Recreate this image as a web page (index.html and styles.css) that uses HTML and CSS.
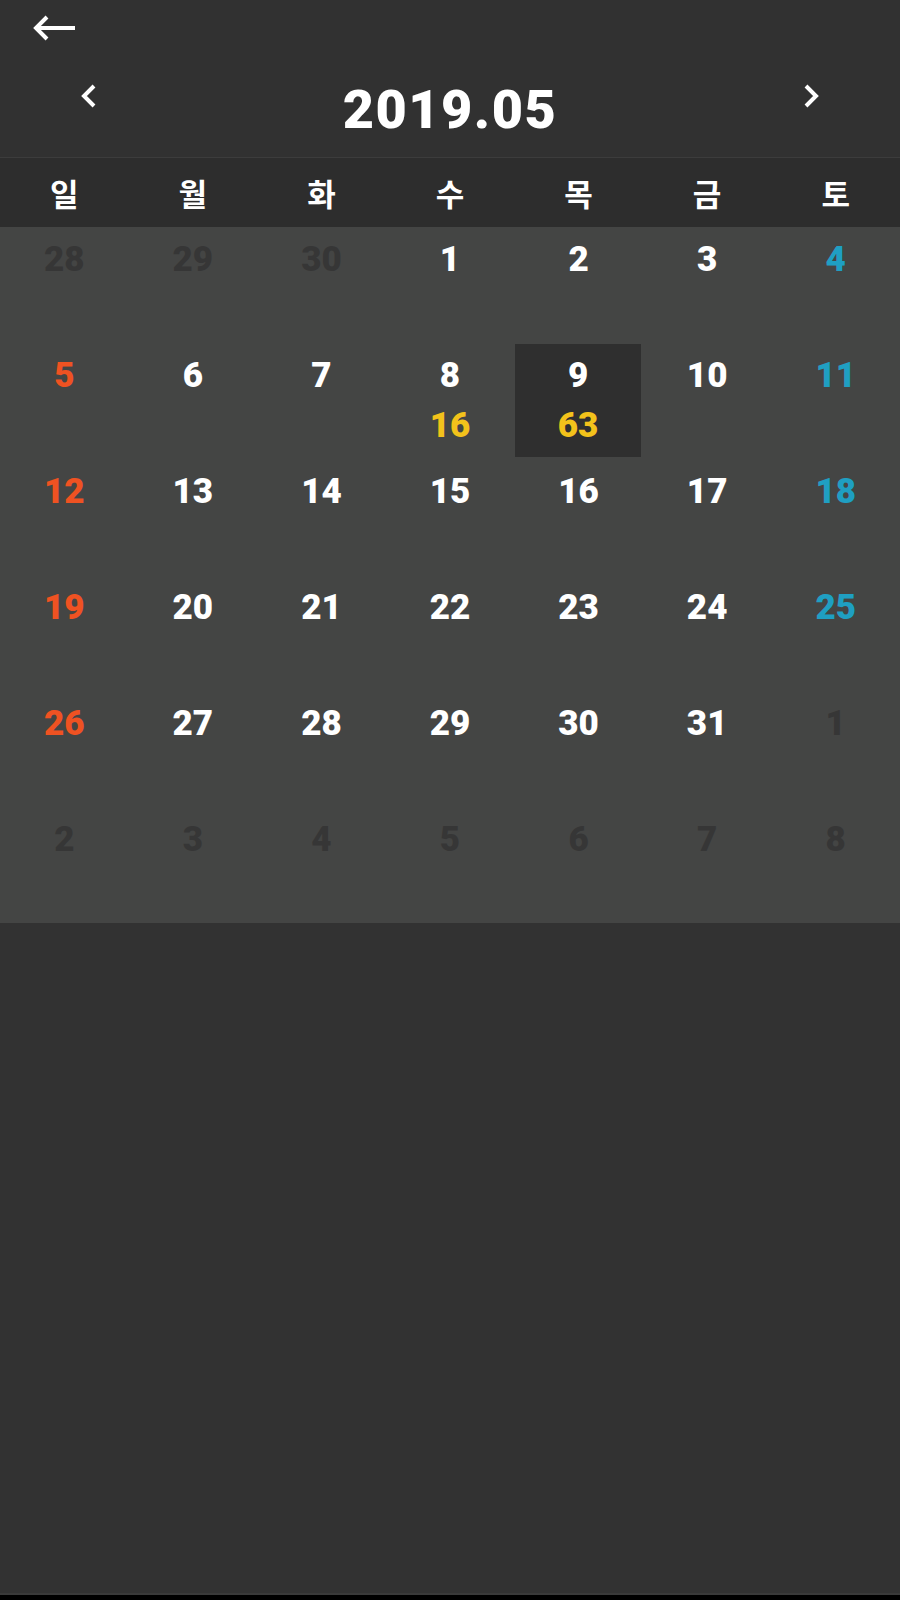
FILE: index.html
```html
<!DOCTYPE html>
<html lang="ko">
<head>
    <meta charset="UTF-8">
    <meta name="viewport" content="width=device-width, initial-scale=1.0">
    <title>달력</title>
    <link rel="stylesheet" href="styles.css">
</head>
<body>
    <div class="screen">
        <div class="top-bar">
            <a href="#" class="back-button">
                <svg width="44" height="26" viewBox="0 0 44 26">
                    <path d="M3 13 H42 M14 2 L3 13 L14 24" fill="none" stroke="#fff" stroke-width="4" stroke-linejoin="miter"/>
                </svg>
            </a>
        </div>

        <div class="month-bar">
            <a href="#" class="month-nav">
                <svg width="20" height="26" viewBox="0 0 20 26">
                    <path d="M15 3 L5 13 L15 23" fill="none" stroke="#fff" stroke-width="4"/>
                </svg>
            </a>
            <h1 class="month-title">2019.05</h1>
            <a href="#" class="month-nav">
                <svg width="20" height="26" viewBox="0 0 20 26">
                    <path d="M5 3 L15 13 L5 23" fill="none" stroke="#fff" stroke-width="4"/>
                </svg>
            </a>
        </div>

        <div class="week-row">
            <div>일</div>
            <div>월</div>
            <div>화</div>
            <div>수</div>
            <div>목</div>
            <div>금</div>
            <div>토</div>
        </div>

        <div class="days">
            <!-- 1주 -->
            <div class="day other"><span class="num">28</span></div>
            <div class="day other"><span class="num">29</span></div>
            <div class="day other"><span class="num">30</span></div>
            <div class="day"><span class="num">1</span></div>
            <div class="day"><span class="num">2</span></div>
            <div class="day"><span class="num">3</span></div>
            <div class="day sat"><span class="num">4</span></div>
            <!-- 2주 -->
            <div class="day sun"><span class="num">5</span></div>
            <div class="day"><span class="num">6</span></div>
            <div class="day"><span class="num">7</span></div>
            <div class="day"><span class="num">8</span><span class="count">16</span></div>
            <div class="day today"><span class="num">9</span><span class="count">63</span></div>
            <div class="day"><span class="num">10</span></div>
            <div class="day sat"><span class="num">11</span></div>
            <!-- 3주 -->
            <div class="day sun"><span class="num">12</span></div>
            <div class="day"><span class="num">13</span></div>
            <div class="day"><span class="num">14</span></div>
            <div class="day"><span class="num">15</span></div>
            <div class="day"><span class="num">16</span></div>
            <div class="day"><span class="num">17</span></div>
            <div class="day sat"><span class="num">18</span></div>
            <!-- 4주 -->
            <div class="day sun"><span class="num">19</span></div>
            <div class="day"><span class="num">20</span></div>
            <div class="day"><span class="num">21</span></div>
            <div class="day"><span class="num">22</span></div>
            <div class="day"><span class="num">23</span></div>
            <div class="day"><span class="num">24</span></div>
            <div class="day sat"><span class="num">25</span></div>
            <!-- 5주 -->
            <div class="day sun"><span class="num">26</span></div>
            <div class="day"><span class="num">27</span></div>
            <div class="day"><span class="num">28</span></div>
            <div class="day"><span class="num">29</span></div>
            <div class="day"><span class="num">30</span></div>
            <div class="day"><span class="num">31</span></div>
            <div class="day other"><span class="num">1</span></div>
            <!-- 6주 -->
            <div class="day other"><span class="num">2</span></div>
            <div class="day other"><span class="num">3</span></div>
            <div class="day other"><span class="num">4</span></div>
            <div class="day other"><span class="num">5</span></div>
            <div class="day other"><span class="num">6</span></div>
            <div class="day other"><span class="num">7</span></div>
            <div class="day other"><span class="num">8</span></div>
        </div>

        <div class="filler"></div>
        <div class="nav-edge"></div>
    </div>
</body>
</html>
```

FILE: styles.css
```css
body {
    margin: 0;
    background-color: #313131;
    font-family: Roboto, "Noto Sans CJK KR", sans-serif;
    color: #fff;
}
.screen {
    display: flex;
    flex-direction: column;
    min-height: 1600px;
}
.top-bar {
    height: 56px;
    display: flex;
    align-items: center;
    padding-left: 33px;
}
.back-button {
    display: flex;
}
.month-bar {
    height: 101px;
    display: flex;
    justify-content: space-between;
    align-items: flex-start;
    padding: 0 79px;
    border-bottom: 1px solid #3c3c3c;
}
.month-nav {
    display: flex;
    padding-top: 27px;
}
.month-title {
    margin: 0;
    font-size: 54px;
    font-weight: 900;
    letter-spacing: 1.5px;
    line-height: 104px;
    margin-top: 2px;
    height: 96px;
    overflow: hidden;
}
.week-row {
    display: grid;
    grid-template-columns: repeat(7, 1fr);
    height: 69px;
    background-color: #2d2d2d;
    font-size: 31px;
    font-weight: 700;
    text-align: center;
    line-height: 76px;
}
.days {
    display: grid;
    grid-template-columns: repeat(7, 1fr);
    grid-auto-rows: 116px;
    background-color: #444544;
}
.day {
    display: flex;
    flex-direction: column;
    align-items: center;
    padding-top: 8px;
    font-size: 35px;
    font-weight: 900;
    line-height: 50px;
}
.day.today {
    background-color: #2f2f2f;
    margin: 1px 2px 2px 1px;
    padding-top: 7px;
}
.day.sun {
    color: #ef5222;
}
.day.sat {
    color: #1f9fc2;
}
.day.other {
    color: #363636;
}
.count {
    color: #f3c21b;
}
.filler {
    flex: 1;
    background-color: #323232;
}
.nav-edge {
    height: 5px;
    background-color: #000;
    border-top: 2px solid #3a3a3a;
}
```
